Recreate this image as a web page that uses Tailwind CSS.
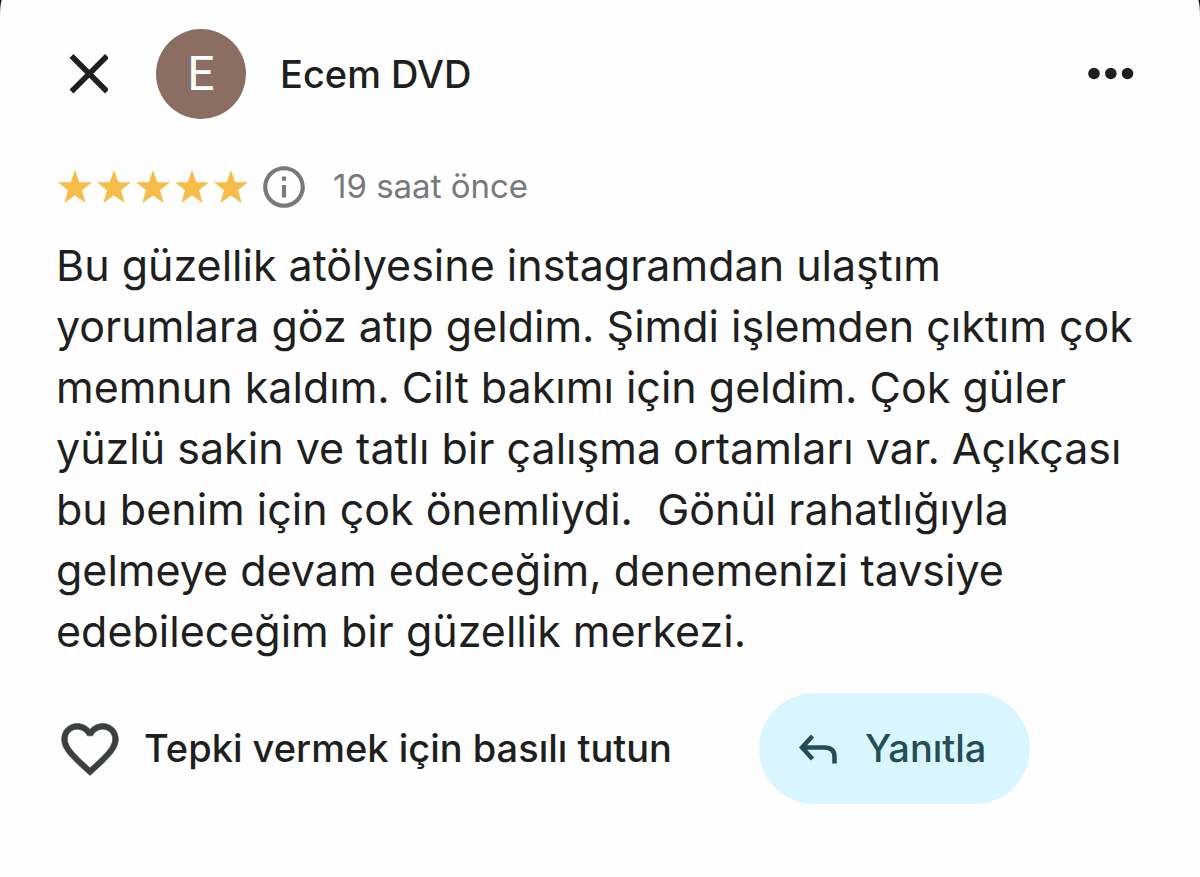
<!DOCTYPE html>
<html lang="tr">
<head>
    <title>Yorum</title>
    <meta charset="UTF-8">
    <meta name="viewport" content="width=device-width, initial-scale=1.0">
    <script src="https://cdn.jsdelivr.net/npm/@tailwindcss/browser@4"></script>
</head>
<body class="font-['Inter',sans-serif] text-[#1f1f1f] antialiased bg-black">
    <main class="min-h-screen bg-[#fefefe] rounded-t-[2px_16px] px-14 pt-7 pb-18">

        <!-- Başlık -->
        <header class="flex items-center h-[92px]">
            <button type="button" aria-label="Kapat" class="ml-3 w-10 h-10">
                <svg viewBox="0 0 40 40" class="w-full h-full" fill="none" stroke="currentColor" stroke-width="5.500">
                    <path d="M3.500 2L39 37.500M39 2L3.500 37.500"/>
                </svg>
            </button>
            <div class="ml-12 w-[90px] h-[90px] rounded-full bg-[#8a6e64] text-white text-[48px] flex items-center justify-center font-['Roboto',sans-serif]">E</div>
            <h1 class="ml-[34px] text-[38px] font-medium">Ecem DVD</h1>
            <button type="button" aria-label="Diğer seçenekler" class="ml-auto mr-2.5 w-12 h-10">
                <svg viewBox="0 0 48 40" class="w-full h-full" fill="currentColor">
                    <circle cx="8" cy="19.500" r="5.800"/><circle cx="24.800" cy="19.500" r="5.800"/><circle cx="41.500" cy="19.500" r="5.800"/>
                </svg>
            </button>
        </header>

        <!-- Puan ve tarih -->
        <div class="flex items-center mt-[43px] h-12">
            <svg viewBox="0 0 195 40" class="w-[195px] h-10" fill="#f7bd4b" role="img" aria-label="5 yıldız">
                <defs>
                    <path id="star" d="M17 0L21.300 12.300H34L24 20.300L27.700 33L17 25.600L6.300 33L10 20.300L0 12.300H12.700Z"/>
                </defs>
                <use href="#star" x="2" y="3"/>
                <use href="#star" x="41" y="3"/>
                <use href="#star" x="80" y="3"/>
                <use href="#star" x="119" y="3"/>
                <use href="#star" x="158" y="3"/>
            </svg>
            <button type="button" aria-label="Bilgi" class="ml-2 w-[50px] h-[50px] text-[#77797b]">
                <svg viewBox="0 0 24 24" class="w-full h-full" fill="currentColor">
                    <path d="M11 17h2v-6h-2v6zm1-15C6.480 2 2 6.480 2 12s4.480 10 10 10 10-4.480 10-10S17.520 2 12 2zm0 18c-4.410 0-8-3.590-8-8s3.590-8 8-8 8 3.590 8 8-3.590 8-8 8zM11 9h2V7h-2v2z"/>
                </svg>
            </button>
            <time class="ml-6 text-[33px] text-[#77797b]">19 saat önce</time>
        </div>

        <p class="mt-6 text-[43px] leading-[61px] whitespace-pre-line">Bu güzellik atölyesine instagramdan ulaştım
yorumlara göz atıp geldim. Şimdi işlemden çıktım çok
memnun kaldım. Cilt bakımı için geldim. Çok güler
yüzlü sakin ve tatlı bir çalışma ortamları var. Açıkçası
bu benim için çok önemliydi.&nbsp; Gönül rahatlığıyla
gelmeye devam edeceğim, denemenizi tavsiye
edebileceğim bir güzellik merkezi.</p>

        <!-- Tepki ve yanıt -->
        <div class="flex items-center mt-[31px] text-[38px] font-medium">
            <button type="button" class="flex items-center gap-5">
                <svg viewBox="0 0 24 24" class="w-[68px] h-[68px] text-[#3c3f40]" fill="currentColor" stroke="currentColor" stroke-width="0.200">
                    <path d="M16.500 3c-1.740 0-3.410.81-4.500 2.090C10.910 3.810 9.240 3 7.500 3 4.420 3 2 5.420 2 8.500c0 3.780 3.400 6.860 8.550 11.540L12 21.350l1.450-1.320C18.600 15.360 22 12.280 22 8.500 22 5.420 19.580 3 16.500 3zm-4.400 15.550l-.1.100-.1-.1C7.140 14.240 4 11.390 4 8.500 4 6.500 5.500 5 7.500 5c1.540 0 3.040.99 3.570 2.360h1.870C13.460 5.990 14.960 5 16.500 5c2 0 3.500 1.500 3.500 3.500 0 2.890-3.140 5.740-7.900 10.050z"/>
                </svg>
                <span>Tepki vermek için basılı tutun</span>
            </button>
            <button type="button" class="ml-[87px] flex items-center gap-7 h-[111px] pl-10 pr-11 rounded-full bg-[#d9f6fe] text-[#254d55]">
                <svg viewBox="0 0 38 30" class="w-[38px] h-[30px]" fill="none" stroke="currentColor" stroke-width="4.500">
                    <path d="M13.500 2L3 13.500L13.500 25M3 13.500H25.500Q35.500 13.500 35.500 23V29.500"/>
                </svg>
                <span>Yanıtla</span>
            </button>
        </div>
    </main>
</body>
</html>
